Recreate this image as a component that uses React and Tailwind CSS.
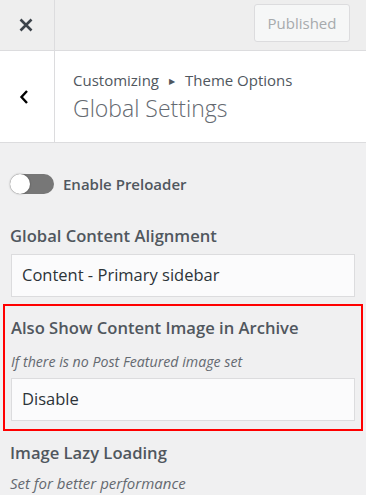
import React from 'react';

const font = { fontFamily: '"Open Sans", "Noto Sans", sans-serif' };

function SelectBox({ value, className = 'mt-[7px]' }) {
    return (
        <div className={`${className} h-[43px] bg-[#fbfbfc] border border-[#dcdcde] flex items-center px-[10px] text-[16.5px] text-[#2c3338]`}>
            {value}
        </div>
    );
}

export default function App() {
    return (
        <div className="w-[366px] h-[495px] overflow-hidden bg-[#f0f0f1]" style={font}>
            <div className="h-[51px] flex bg-[#eeeeee] border-b border-[#dcdcde]">
                <div className="w-[55px] flex items-center justify-center border-r border-[#dcdcde] pr-[2px]">
                    <svg width="14" height="14" viewBox="0 0 14 14">
                        <path d="M1.5 1.5 L12.5 12.5 M12.5 1.5 L1.5 12.5" stroke="#3c434a" strokeWidth="2.6" />
                    </svg>
                </div>
                <div className="flex-1 flex items-center justify-end pr-[16px]">
                    <div className="h-[38px] w-[96px] mb-[4px] rounded-[3px] border border-[#dcdcde] bg-[#f6f7f7] flex items-center justify-center text-[15px] text-[#a7aaad]">
                        Published
                    </div>
                </div>
            </div>
            <div className="h-[92px] flex bg-white border-b border-[#dcdcde]">
                <div className="w-[55px] flex items-center justify-center border-r border-[#dcdcde] pr-[6px]">
                    <svg width="10" height="16" viewBox="0 0 10 16">
                        <path d="M8 2 L2.5 8 L8 14" stroke="#000" strokeWidth="2.4" fill="none" />
                    </svg>
                </div>
                <div className="flex-1 pl-[18px] pt-[19px]">
                    <div className="text-[15px] leading-[21px] text-[#50575e] flex items-center">
                        Customizing
                        <span className="mx-[10px] text-[8px] text-[#50575e]">▶</span>
                        Theme Options
                    </div>
                    <div className="text-[23px] leading-[30px] mt-[2px] text-[#646970] font-light">Global Settings</div>
                </div>
            </div>
            <div className="px-[11px] pt-[30px]">
                <div className="flex items-center">
                    <div className="relative w-[44px] h-[20px] rounded-full bg-[#777] -ml-[1px]">
                        <div className="absolute left-0 top-0 w-[20px] h-[20px] rounded-full bg-white shadow-[0_0_2px_rgba(0,0,0,0.4)]" />
                    </div>
                    <span className="ml-[9px] text-[15px] font-semibold text-[#50575e]">Enable Preloader</span>
                </div>
                <div className="mt-[29px] text-[16.6px] leading-[22px] font-semibold text-[#50575e] -ml-[1px]">Global Content Alignment</div>
                <SelectBox value="Content - Primary sidebar" />
            </div>
            <div className="mx-[3px] mt-[7px] border-2 border-[#ff0000] px-[6px] pt-[11px] pb-[8px]">
                <div className="text-[16.6px] leading-[22px] font-semibold text-[#50575e]">Also Show Content Image in Archive</div>
                <div className="mt-[13px] text-[14.2px] leading-[20px] italic text-[#646970]">If there is no Post Featured image set</div>
                <SelectBox value="Disable" className="mt-[6px]" />
            </div>
            <div className="px-[10px] pt-[11px]">
                <div className="text-[16.6px] leading-[22px] font-semibold text-[#50575e]">Image Lazy Loading</div>
                <div className="mt-[9px] text-[15px] leading-[20px] italic text-[#646970]">Set for better performance</div>
            </div>
        </div>
    );
}
